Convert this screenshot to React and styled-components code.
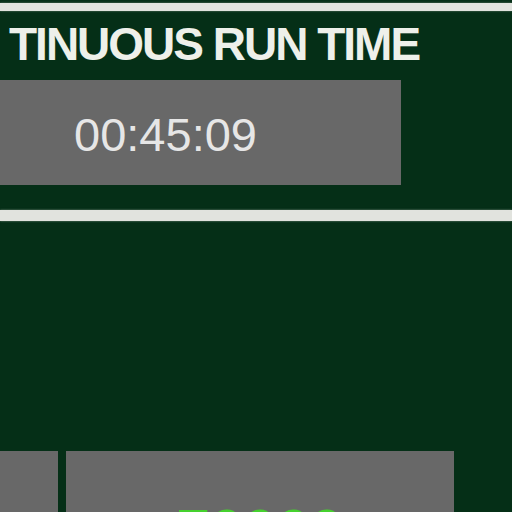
import styled, { createGlobalStyle } from "styled-components";

const Global = createGlobalStyle`
  html, body {
    margin: 0;
    padding: 0;
    background: #052f17;
    overflow: hidden;
  }
`;

const Screen = styled.div`
  width: 512px;
  height: 512px;
  overflow: hidden;
  background: #052f17;
  font-family: "Liberation Sans", Arial, sans-serif;
  display: flex;
  flex-direction: column;
`;

const Rule = styled.div`
  flex: none;
  height: ${(p) => p.h}px;
  margin-top: ${(p) => p.top}px;
  background: #e1e3de;
  box-shadow: 0 0 2px rgba(225, 227, 222, 0.5);
`;

const Title = styled.h1`
  margin: 10px 0 0;
  padding-left: 9px;
  font-size: 46px;
  line-height: 46px;
  font-weight: 700;
  letter-spacing: -2px;
  color: #eef0ea;
  white-space: nowrap;
`;

const TimeBox = styled.div`
  flex: none;
  margin: 13px 0 0 -70px;
  width: 471px;
  height: 105px;
  background: #686868;
  display: flex;
  align-items: center;
  justify-content: center;
  padding-top: 4px;
  box-sizing: border-box;
  font-size: 47px;
  color: #e6e6e6;
`;

const Row = styled.div`
  flex: none;
  display: flex;
  gap: 8px;
  margin-top: 230px;
  height: 70px;
`;

const Cell = styled.div`
  flex: none;
  width: ${(p) => p.w}px;
  margin-left: ${(p) => p.ml || 0}px;
  background: #686868;
  box-sizing: border-box;
  padding-top: 50px;
  text-align: center;
  font-size: 60px;
  line-height: 60px;
  font-weight: 700;
  color: #45d12e;
`;

export default function App() {
  return (
    <>
      <Global />
      <Screen>
        <Rule top={3} h={8} />
        <Title>TINUOUS RUN TIME</Title>
        <TimeBox>00:45:09</TimeBox>
        <Rule top={25} h={11} />
        <Row>
          <Cell w={128} ml={-70} />
          <Cell w={388}>70000</Cell>
        </Row>
      </Screen>
    </>
  );
}
